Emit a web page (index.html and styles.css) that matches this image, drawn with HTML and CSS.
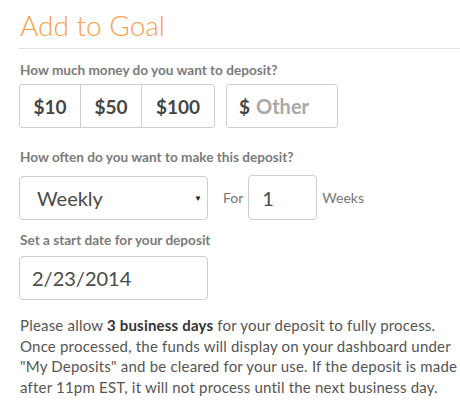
FILE: index.html
```html
<!DOCTYPE html>
<html>
<head>
<meta charset="utf-8">
<link rel="stylesheet" href="styles.css">
</head>
<body>
<div class="page">
  <h1 class="title">Add to Goal</h1>
  <div class="rule"></div>
  <div class="label label-first">How much money do you want to deposit?</div>
  <div class="amount-row">
    <div class="btn-group">
      <div class="amt amt-10">$10</div>
      <div class="amt amt-50">$50</div>
      <div class="amt amt-100">$100</div>
    </div>
    <div class="other"><span class="dollar">$</span><span class="ph">Other</span></div>
  </div>
  <div class="label label-often">How often do you want to make this deposit?</div>
  <div class="freq-row">
    <div class="select"><span>Weekly</span><span class="caret">&#9660;</span></div>
    <span class="for">For</span>
    <div class="num">1</div>
    <span class="weeks">Weeks</span>
  </div>
  <div class="label label-date">Set a start date for your deposit</div>
  <div class="date">2/23/2014</div>
  <p class="note">Please allow <b>3 business days</b> for your deposit to fully process.<br>Once processed, the funds will display on your dashboard under<br>"My Deposits" and be cleared for your use. If the deposit is made<br>after 11pm EST, it will not process until the next business day.</p>
</div>
</body>
</html>
```
FILE: styles.css
```css
html, body { margin: 0; padding: 0; background: #fff; }
.page { padding: 0 0 0 19px; font-family: "Lato", "Liberation Sans", sans-serif; }
.title {
  margin: 0; padding: 8px 0 0 1px;
  font-family: "Lato", sans-serif; font-weight: 300;
  font-size: 28px; line-height: 34px; color: #f7a04b;
}
.rule { margin: 6px 0 0 -1px; border-top: 1px solid #e4e4e4; }
.label {
  font-family: "Lato", sans-serif; font-weight: 700; font-size: 13.6px;
  color: #7b7b7b; line-height: 16px; padding-left: 1px;
}
.label-first { margin-top: 13px; }
.amount-row { display: flex; margin-top: 6px; gap: 11px; }
.btn-group {
  display: flex; border: 1px solid #cfcfcf; border-radius: 3px; height: 42px;
}
.amt {
  display: flex; align-items: center; justify-content: center;
  font-weight: 700; font-size: 19px; color: #454545;
  border-left: 1px solid #cfcfcf;
}
.amt:first-child { border-left: none; }
.amt-10 { width: 60px; }
.amt-50 { width: 60px; }
.amt-100 { width: 72px; }
.other {
  width: 112px; height: 44px; border: 1px solid #cfcfcf; border-radius: 3px;
  display: flex; align-items: center; padding-left: 12px; box-sizing: border-box;
  font-weight: 700; font-size: 19px;
}
.dollar { color: #454545; margin-right: 6px; }
.ph { color: #a8a8a8; font-size: 20px; }
.label-often { margin-top: 21px; }
.freq-row { display: flex; align-items: center; margin-top: 10px; }
.select {
  width: 189px; height: 44px; box-sizing: border-box;
  border: 1px solid #cfcfcf; border-radius: 4px;
  display: flex; align-items: center; justify-content: space-between;
  padding: 0 5px 0 17px; font-size: 20px; color: #4a4a4a;
}
.caret { font-size: 8px; color: #222; }
.for { margin-left: 15px; font-size: 14px; color: #777; }
.num {
  width: 69px; height: 45px; box-sizing: border-box; margin-left: 5px;
  border: 1px solid #cfcfcf; border-radius: 4px;
  display: flex; align-items: center; padding-left: 13px;
  font-size: 20px; color: #4a4a4a;
}
.weeks { margin-left: 5px; font-size: 14px; color: #777; }
.label-date { margin-top: 12px; }
.date {
  width: 189px; height: 44px; box-sizing: border-box; margin-top: 8px;
  border: 1px solid #cfcfcf; border-radius: 4px;
  display: flex; align-items: center; padding-left: 12px;
  font-size: 20px; color: #4a4a4a;
}
.note {
  margin: 15px 0 0 1px; width: 440px; white-space: nowrap;
  font-family: "Lato", sans-serif; font-size: 15px; line-height: 20.5px;
  letter-spacing: 0.2px; color: #555;
}
.note b { color: #333; font-weight: 700; }
```
